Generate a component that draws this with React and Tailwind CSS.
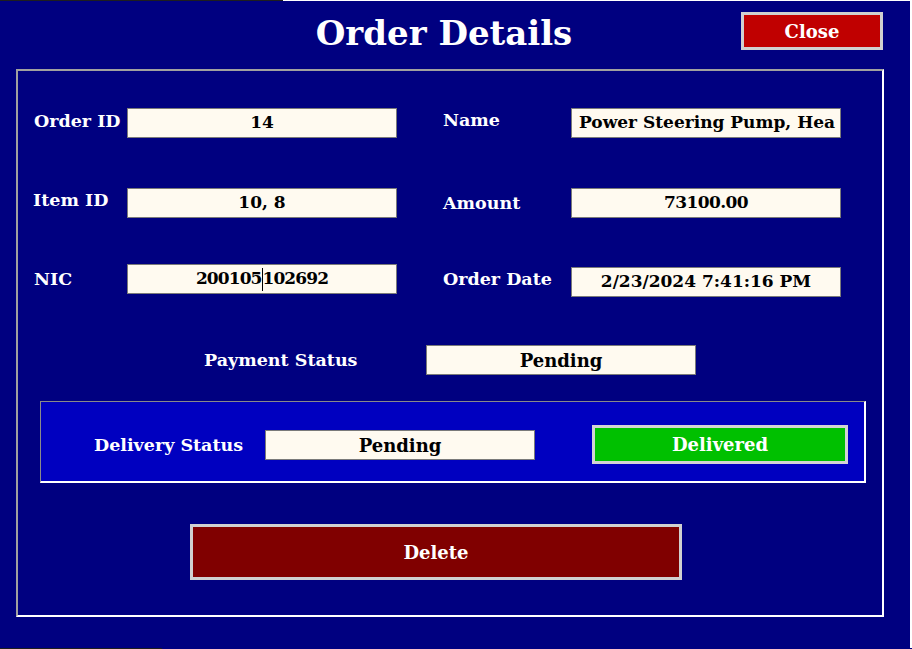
import React from "react";

const font = { fontFamily: '"DejaVu Serif", "Liberation Serif", serif' };

function Box({ children, className = "", left = false, text = "text-[18px]" }) {
  return (
    <div
      className={`w-[270px] h-[30px] shrink-0 border border-[#7a7a7a] bg-[#fffaf0] text-black font-bold ${text} flex items-center whitespace-nowrap overflow-hidden ${
        left ? "justify-start pl-[7px]" : "justify-center"
      } ${className}`}
    >
      {children}
    </div>
  );
}

function Label({ children, className = "" }) {
  return (
    <div className={`shrink-0 text-white font-bold text-[17.5px] leading-[20px] whitespace-nowrap ${className}`}>
      {children}
    </div>
  );
}

export default function App() {
  return (
    <div className="w-[912px] h-[649px] bg-[#000080] flex flex-col overflow-hidden" style={font}>
      {/* top window edge */}
      <div className="h-px flex shrink-0">
        <div className="w-[283px] bg-[#1e1e1e]" />
        <div className="flex-1 bg-white" />
      </div>

      <div className="flex flex-1 min-h-0">
        <div className="w-[910px] flex flex-col">
          {/* header */}
          <div className="h-[68px] flex items-start shrink-0">
            <div className="ml-[297px] mt-[12px] w-[294px] h-[40px] leading-[40px] text-center text-white font-bold text-[34px] whitespace-nowrap">
              Order Details
            </div>
            <button className="ml-[150px] mt-[11px] w-[142px] h-[38px] border-[3px] border-[#d0d0d0] bg-[#c00000] text-white font-bold text-[18px] flex items-center justify-center">
              Close
            </button>
          </div>

          {/* frame */}
          <div className="ml-[16px] w-[868px] h-[548px] border-2 border-t-[#a0a0a0] border-l-[#a0a0a0] border-r-white border-b-white flex flex-col shrink-0">
            {/* row 1 */}
            <div className="flex items-start mt-[37px]">
              <Label className="w-[109px] pl-[16px] mt-[3px]">Order ID</Label>
              <Box text="text-[17px]">14</Box>
              <Label className="ml-[46px] w-[128px] mt-[2px]">Name</Label>
              <Box left text="text-[17px]">Power Steering Pump, Hea</Box>
            </div>

            {/* row 2 */}
            <div className="flex items-start mt-[50px]">
              <Label className="w-[109px] pl-[15px] mt-[2px]">Item ID</Label>
              <Box text="text-[17px]">10, 8</Box>
              <Label className="ml-[46px] w-[128px] mt-[5px]">Amount</Label>
              <Box text="text-[17px] tracking-[-0.6px]">73100.00</Box>
            </div>

            {/* row 3 */}
            <div className="flex items-start mt-[46px]">
              <Label className="w-[109px] pl-[16px] mt-[5px]">NIC</Label>
              <Box text="text-[17px] tracking-[-0.9px]">
                200105
                <span className="inline-block w-px h-[23px] bg-black" />
                102692
              </Box>
              <Label className="ml-[46px] w-[128px] mt-[5px]">Order Date</Label>
              <Box className="mt-[3px]" text="text-[17px]">2/23/2024 7:41:16 PM</Box>
            </div>

            {/* payment */}
            <div className="flex items-center mt-[48px]">
              <Label className="ml-[186px] w-[222px]">Payment Status</Label>
              <Box>Pending</Box>
            </div>

            {/* delivery panel */}
            <div className="ml-[22px] mt-[26px] w-[826px] h-[82px] bg-[#0000c0] border-t border-l border-t-[#8a8a8a] border-l-[#8a8a8a] border-r-2 border-b-2 border-r-white border-b-white flex items-start shrink-0">
              <Label className="ml-[53px] w-[171px] mt-[33px]">Delivery Status</Label>
              <Box className="mt-[28px]">Pending</Box>
              <button className="ml-[57px] mt-[23px] w-[256px] h-[39px] border-[3px] border-[#d4d4d4] bg-[#00c000] text-white font-bold text-[18px] flex items-center justify-center">
                Delivered
              </button>
            </div>

            {/* delete */}
            <button className="ml-[172px] mt-[41px] w-[492px] h-[56px] border-[3px] border-[#d0d0d0] bg-[#800000] text-white font-bold text-[18px] flex items-center justify-center shrink-0">
              Delete
            </button>
          </div>
        </div>
        <div className="w-[2px] bg-white" />
      </div>

      {/* bottom edge */}
      <div className="h-px flex shrink-0">
        <div className="w-[162px] bg-[#1e1e1e]" />
      </div>
    </div>
  );
}
